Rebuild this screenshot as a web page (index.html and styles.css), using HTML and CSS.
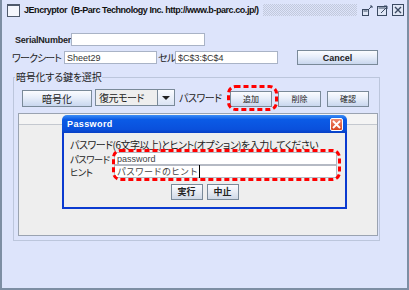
FILE: index.html
```html
<!DOCTYPE html>
<html lang="ja">
<head>
    <meta charset="UTF-8">
    <title>JEncryptor</title>
    <link rel="stylesheet" href="styles.css">
</head>
<body>
    <div class="window">
        <div class="titlebar">
            <span class="app-icon"></span>
            <span class="title">JEncryptor  (B-Parc Technology Inc. http://www.b-parc.co.jp/)</span>
            <span class="grip"></span>
            <span class="wbtns">
                <svg width="11" height="11" viewBox="0 0 11 11"><rect x="0.5" y="4.5" width="6" height="6" fill="#dfe6f5" stroke="#3b4a62"/><rect x="1.5" y="5.5" width="4" height="1" fill="#3b4a62"/><path d="M7 4 L10 1 M8 1 H10 V3" stroke="#3b4a62" fill="none"/></svg>
                <svg width="11" height="11" viewBox="0 0 11 11"><rect x="0.5" y="1.5" width="9" height="9" fill="#dfe6f5" stroke="#3b4a62"/><rect x="1.5" y="2.5" width="7" height="1" fill="#3b4a62"/><path d="M4 8 L9 3 M7 1 H10 V4" stroke="#3b4a62" fill="none"/></svg>
                <svg width="12" height="12" viewBox="0 0 12 12"><rect x="0.5" y="0.5" width="11" height="11" fill="#dfe6f5" stroke="#3b4a62"/><path d="M3 3 L9 9 M9 3 L3 9" stroke="#3b4a62" stroke-width="1.4"/></svg>
            </span>
        </div>

        <div class="content">
            <div class="row row-serial">
                <label class="lbl lbl-serial">SerialNumber</label>
                <input class="field field-serial" type="text" value="">
            </div>
            <div class="row row-sheet">
                <label class="lbl lbl-sheet">ワークシート</label>
                <input class="field field-sheet" type="text" value="Sheet29">
                <label class="lbl lbl-cell">セル</label>
                <input class="field field-cell" type="text" value="$C$3:$C$4">
                <button class="btn btn-cancel">Cancel</button>
            </div>

            <fieldset class="group">
                <legend>暗号化する鍵を選択</legend>
                <div class="row row-keys">
                    <button class="btn btn-encrypt">暗号化</button>
                    <div class="combo">
                        <span class="combo-text">復元モード</span>
                        <span class="combo-arrow"></span>
                    </div>
                    <span class="lbl lbl-pass">パスワード</span>
                    <button class="btn btn-small btn-add">追加</button>
                    <button class="btn btn-small btn-del">削除</button>
                    <button class="btn btn-small btn-check">確認</button>
                </div>
                <div class="panel">
                    <div class="panel-head"></div>
                </div>
            </fieldset>
        </div>

        <div class="dialog">
            <div class="dlg-title">
                <span>Password</span>
                <span class="dlg-close">
                    <svg width="9" height="9" viewBox="0 0 9 9"><path d="M1 1 L8 8 M8 1 L1 8" stroke="#fff" stroke-width="1.8"/></svg>
                </span>
            </div>
            <div class="dlg-body">
                <div class="dlg-msg">パスワード(6文字以上)とヒント(オプション)を入力してください</div>
                <div class="dlg-row">
                    <span class="dlg-lbl">パスワード</span>
                    <input class="dlg-field" type="text" value="password">
                </div>
                <div class="dlg-row">
                    <span class="dlg-lbl">ヒント</span>
                    <div class="dlg-field"><span class="caret">パスワードのヒント</span></div>
                </div>
                <div class="dlg-btns">
                    <button class="btn dlg-btn">実行</button>
                    <button class="btn dlg-btn">中止</button>
                </div>
            </div>
        </div>

        <!-- red callouts -->
        <svg class="mark mark-add" width="51" height="26" viewBox="0 0 51 26"><rect x="1.5" y="1.5" width="48" height="23" rx="7" fill="none" stroke="#f00" stroke-width="3" stroke-dasharray="5 3"/></svg>
        <svg class="mark mark-fields" width="229" height="32" viewBox="0 0 229 32"><rect x="1.5" y="1.5" width="226" height="29" rx="7" fill="none" stroke="#f00" stroke-width="3" stroke-dasharray="5 3"/></svg>
    </div>
</body>
</html>
```

FILE: styles.css
```css
:root{
    --win-bg: #dde4fb;
    --edge: #7d8ea3;
    --btn-edge: #7a8a99;
}
*{
    box-sizing: border-box;
}
body{
    margin: 0;
    width: 409px;
    height: 290px;
    overflow: hidden;
    font-family: "Noto Sans CJK JP", sans-serif;
    font-feature-settings: "palt";
    font-size: 10px;
    letter-spacing: -0.5px;
    color: #222;
}
.window{
    position: relative;
    height: 290px;
    background-color: var(--win-bg);
    border: 2px solid var(--edge);
    border-top: 0;
}
.titlebar{
    height: 20px;
    display: flex;
    align-items: center;
    padding-left: 5px;
}
.app-icon{
    width: 13px;
    height: 13px;
    border: 1px solid #4f5a6c;
    border-top-width: 2px;
    background-color: #f5f7fd;
}
.title{
    margin-left: 4px;
    font: bold 9px "Liberation Sans", sans-serif;
    letter-spacing: -0.45px;
    white-space: pre;
    color: #111;
}
.grip{
    flex: 1;
    height: 12px;
    margin: 0 5px 0 4px;
    background: conic-gradient(#c2c9dc 25%, transparent 0 50%, #c2c9dc 0 75%, transparent 0) 0 0 / 2px 2px;
}
.wbtns{
    display: flex;
    align-items: center;
    gap: 4px;
    margin-right: 3px;
}
.wbtns svg{
    display: block;
}

/* form */
.row{
    display: flex;
    align-items: center;
}
.lbl{
    white-space: nowrap;
    line-height: 12px;
}
.field{
    height: 13px;
    margin: 0;
    padding: 0 2px;
    border: 1px solid #a9b3c6;
    background-color: #fff;
    font: 9px "Liberation Sans", sans-serif;
    letter-spacing: 0;
    color: #333;
    outline: none;
}
.row-serial{
    margin-top: 13px;
    padding-left: 13px;
    height: 13px;
}
.lbl-serial{
    width: 56px;
    font: bold 9px "Liberation Sans", sans-serif;
    letter-spacing: -0.2px;
}
.field-serial{
    width: 134px;
}
.row-sheet{
    margin-top: 4px;
    padding-left: 10px;
    height: 15px;
}
.lbl-sheet{
    width: 52px;
    letter-spacing: -0.9px;
}
.field-sheet{
    width: 93px;
}
.lbl-cell{
    width: 18px;
    padding-left: 1px;
}
.field-cell{
    width: 103px;
}
.btn{
    margin: 0;
    padding: 0;
    border: 1px solid var(--btn-edge);
    background: linear-gradient(#fbfcff, #e7eefa 45%, #c9d7ee);
    font-family: "Noto Sans CJK JP", sans-serif;
    font-feature-settings: "palt";
    font-size: 9px;
    line-height: 12px;
    color: #222;
}
.btn-cancel{
    margin-left: 19px;
    width: 81px;
    height: 15px;
    font: bold 9px "Liberation Sans", sans-serif;
}

/* group */
.group{
    margin: 6px 0 0 11px;
    padding: 6px 0 3px 3px;
    width: 367px;
    height: 170px;
    min-width: 0;
    border: 1px solid #bcc6dc;
}
.group legend{
    margin-left: -2px;
    padding: 0 1px;
    font-size: 10px;
    line-height: 12px;
    letter-spacing: -0.2px;
}
.row-keys{
    padding-left: 5px;
    height: 18px;
}
.btn-encrypt{
    width: 70px;
    height: 17px;
    margin-top: 1px;
    font-size: 10px;
}
.combo{
    display: flex;
    margin-left: 3px;
    width: 80px;
    height: 17px;
    margin-bottom: 1px;
}
.combo-text{
    flex: 1;
    border: 1px solid var(--btn-edge);
    background-color: #eeeeee;
    padding-left: 3px;
    line-height: 15px;
    font-size: 10px;
}
.combo-arrow{
    width: 17px;
    border: 1px solid var(--btn-edge);
    border-left: 0;
    background: linear-gradient(#fbfcff, #dbe4f4);
    display: flex;
    align-items: center;
    justify-content: center;
}
.combo-arrow::after{
    content: "";
    border: 4px solid transparent;
    border-top: 4px solid #222;
    border-bottom: 0;
}
.lbl-pass{
    margin-left: 4px;
    width: 51px;
    font-size: 10px;
}
.btn-small{
    height: 16px;
    margin-top: 1px;
    font-size: 8px;
}
.btn-add{
    width: 42px;
}
.btn-del{
    width: 43px;
    margin-left: 6px;
}
.btn-check{
    width: 42px;
    margin-left: 6px;
}
.panel{
    margin: 6px 0 0 1px;
    width: 360px;
    height: 123px;
    border: 1px solid #9aa3b1;
    background-color: #eeeeee;
}
.panel-head{
    height: 11px;
    border-bottom: 1px solid #c4c8cf;
    background-color: #f4f4f4;
}

/* password dialog */
.dialog{
    position: absolute;
    left: 60px;
    top: 115px;
    width: 285px;
    height: 94px;
    display: flex;
    flex-direction: column;
}
.dlg-title{
    height: 18px;
    display: flex;
    align-items: center;
    justify-content: space-between;
    padding: 0 4px 0 5px;
    border-radius: 5px 5px 0 0;
    background: linear-gradient(#3d8df5, #0b5be6 25%, #0a50dc 80%, #073fc4);
    font: bold 9px "Liberation Sans", sans-serif;
    letter-spacing: 0.4px;
    color: #fff;
}
.dlg-close{
    width: 13px;
    height: 13px;
    border: 1px solid #fff;
    border-radius: 2px;
    background: linear-gradient(#f08a70, #d8451f);
    display: flex;
    align-items: center;
    justify-content: center;
}
.dlg-close svg{
    display: block;
}
.dlg-body{
    flex: 1;
    border: 2px solid #0a3ad0;
    border-top: 0;
    background-color: #eeeeee;
}
.dlg-msg{
    margin-top: 6px;
    padding-left: 6px;
    height: 12px;
    line-height: 12px;
    font-size: 10px;
    letter-spacing: -0.5px;
    white-space: nowrap;
}
.dlg-row{
    display: flex;
    align-items: center;
    padding-left: 6px;
    height: 13px;
}
.dlg-msg + .dlg-row{
    margin-top: 1px;
}
.dlg-lbl{
    width: 44px;
    font-size: 9.5px;
    line-height: 12px;
    letter-spacing: -0.7px;
    white-space: nowrap;
}
.dlg-field{
    width: 223px;
    height: 13px;
    margin: 0;
    padding: 0 2px;
    border: 1px solid #b5bac4;
    background-color: #fff;
    font: 9px "Liberation Sans", sans-serif;
    line-height: 11px;
    letter-spacing: 0;
    color: #444;
    outline: none;
}
div.dlg-field{
    font-family: "Noto Sans CJK JP", sans-serif;
    font-size: 9px;
}
.caret{
    padding-right: 1px;
    border-right: 1px solid #000;
}
.dlg-btns{
    display: flex;
    justify-content: center;
    gap: 4px;
    margin-top: 6px;
}
.dlg-btn{
    width: 32px;
    height: 16px;
    font-size: 9px;
    font-weight: bold;
    background: linear-gradient(#fbfcff, #e6ebf3 50%, #cfd8e6);
}

.mark{
    position: absolute;
    display: block;
}
.mark-add{
    left: 225px;
    top: 85px;
}
.mark-fields{
    left: 110px;
    top: 149px;
}
```
